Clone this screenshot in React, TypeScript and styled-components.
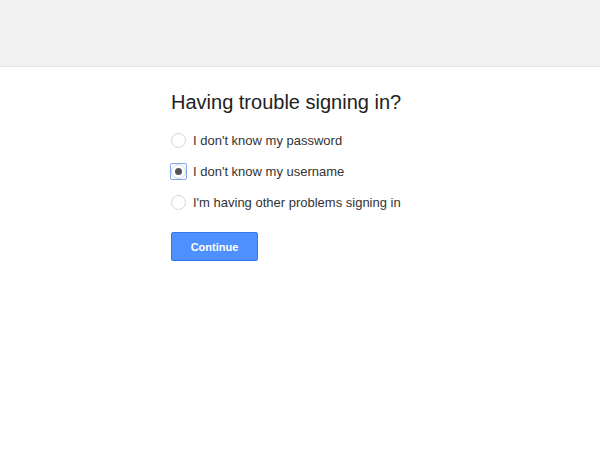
import React, { useState } from "react";
import styled, { createGlobalStyle } from "styled-components";

const GlobalStyle = createGlobalStyle`
  html, body {
    margin: 0;
    padding: 0;
    background: #fff;
    font-family: Arial, "Liberation Sans", sans-serif;
  }
`;

const Header = styled.div`
  height: 66px;
  background: #f1f1f1;
  border-bottom: 1px solid #e5e5e5;
`;

const Main = styled.div`
  padding: 22px 0 0 171px;
`;

const Title = styled.h1`
  margin: 0 0 10px 0;
  font-size: 20px;
  line-height: 26px;
  font-weight: normal;
  color: #222;
`;

const Options = styled.div`
  display: flex;
  flex-direction: column;
`;

const OptionRow = styled.label`
  display: flex;
  align-items: center;
  height: 31px;
  cursor: pointer;
  font-size: 13px;
  color: #333;
`;

const RadioBox = styled.span<{ $focused: boolean }>`
  width: 17px;
  height: 17px;
  margin-left: -1px;
  margin-right: 6px;
  display: flex;
  align-items: center;
  justify-content: center;
  box-sizing: border-box;
  border: 1px solid ${(p) => (p.$focused ? "#7fa7ee" : "transparent")};
  border-radius: 2px;
`;

const Circle = styled.span`
  width: 15px;
  height: 15px;
  box-sizing: border-box;
  border: 1px solid #d5d5d5;
  border-radius: 50%;
  background: #fff;
  display: flex;
  align-items: center;
  justify-content: center;
`;

const Dot = styled.span`
  width: 7px;
  height: 7px;
  border-radius: 50%;
  background: #555;
`;

const Button = styled.button`
  margin-top: 14px;
  width: 87px;
  height: 29px;
  box-sizing: border-box;
  background: #4d90fe;
  border: 1px solid #3079ed;
  border-radius: 2px;
  color: #fff;
  font-family: Arial, "Liberation Sans", sans-serif;
  font-size: 11px;
  font-weight: bold;
  cursor: pointer;
`;

const choices = [
  "I don't know my password",
  "I don't know my username",
  "I'm having other problems signing in",
];

export default function App() {
  const [selected, setSelected] = useState(1);
  return (
    <>
      <GlobalStyle />
      <Header />
      <Main>
        <Title>Having trouble signing in?</Title>
        <Options>
          {choices.map((c, i) => (
            <OptionRow key={c} onClick={() => setSelected(i)}>
              <RadioBox $focused={selected === i}>
                <Circle>{selected === i && <Dot />}</Circle>
              </RadioBox>
              {c}
            </OptionRow>
          ))}
        </Options>
        <Button>Continue</Button>
      </Main>
    </>
  );
}
